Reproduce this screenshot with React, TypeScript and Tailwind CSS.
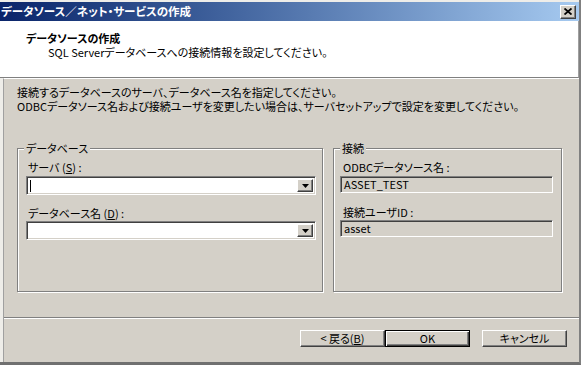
import React from "react";

const font = "[font-family:'MS_UI_Gothic','Noto_Sans_CJK_JP',sans-serif] [font-feature-settings:'palt']";

function DropArrow() {
  return (
    <div className="absolute right-[2px] top-[2px] bottom-[2px] w-[16px] bg-[#d4d0c8] border border-t-white border-l-white border-r-[#404040] border-b-[#404040] shadow-[inset_-1px_-1px_0_#808080] flex items-center justify-center">
      <svg width="7" height="4" viewBox="0 0 7 4">
        <path d="M0 0H7L3.5 4Z" fill="#000" />
      </svg>
    </div>
  );
}

function Combo({ cursor }: { cursor?: boolean }) {
  return (
    <div className="relative h-[19px] bg-white border border-t-[#808080] border-l-[#808080] border-r-white border-b-white shadow-[inset_1px_1px_0_#404040,inset_-1px_-1px_0_#d4d0c8]">
      {cursor && <div className="absolute left-[3px] top-[3px] w-px h-[12px] bg-black" />}
      <DropArrow />
    </div>
  );
}

function Field({ value }: { value: string }) {
  return (
    <div className="h-[17px] bg-[#d4d0c8] border border-t-[#808080] border-l-[#808080] border-r-white border-b-white shadow-[inset_1px_1px_0_#404040,inset_-1px_-1px_0_#d4d0c8] pl-[3px] text-[11px] leading-[15px] text-black">
      {value}
    </div>
  );
}

function Group({ title, className, children }: { title: string; className: string; children: React.ReactNode }) {
  return (
    <div className={`relative border border-[#808080] shadow-[inset_1px_1px_0_#fff,1px_1px_0_#fff] ${className}`}>
      <div className="absolute left-[6px] top-[-7px] bg-[#d4d0c8] px-[2px] text-[11px] leading-[12px]">{title}</div>
      {children}
    </div>
  );
}

function Button({ children, isDefault }: { children: React.ReactNode; isDefault?: boolean }) {
  return (
    <div
      className={`w-[85px] h-[17px] flex items-center justify-center bg-[#d4d0c8] text-[11px] leading-none ${
        isDefault
          ? "border border-black shadow-[inset_1px_1px_0_#fff,inset_-1px_-1px_0_#404040,inset_-2px_-2px_0_#808080]"
          : "border border-t-white border-l-white border-r-[#404040] border-b-[#404040] shadow-[inset_-1px_-1px_0_#808080]"
      }`}
    >
      {children}
    </div>
  );
}

export default function App() {
  return (
    <div className={`w-[585px] h-[367px] bg-white overflow-hidden text-black ${font}`}>
      <div className="w-[581px] h-[365px] flex flex-col bg-[#eeede9] pt-[2px] pl-[3px] border-r-2 border-r-[#808080] border-b-[3px] border-b-[#707070]">
        {/* title bar */}
        <div className="h-[19px] shrink-0 flex items-center justify-between bg-gradient-to-r from-[#0a246a] to-[#a6caf0] pl-[1px] pr-[3px] -ml-[3px]">
          <span className="text-white font-bold text-[11.5px] leading-none">データソース／ネット・サービスの作成</span>
          <div className="w-[16px] h-[14px] bg-[#d4d0c8] border border-t-white border-l-white border-r-[#404040] border-b-[#404040] shadow-[inset_-1px_-1px_0_#808080] flex items-center justify-center">
            <svg width="8" height="7" viewBox="0 0 8 7">
              <path d="M0.5 0.5L7.5 6.5M7.5 0.5L0.5 6.5" stroke="#000" strokeWidth="1.8" />
            </svg>
          </div>
        </div>
        {/* header */}
        <div className="h-[57px] shrink-0 bg-white -ml-[3px] pl-[26px] pt-[11px] border-b border-b-[#808080] border-r border-r-[#a0a0a0]">
          <div className="font-bold text-[11px] leading-[12px]">データソースの作成</div>
          <div className="ml-[22px] mt-[2px] text-[11px] leading-[12px]">SQL Serverデータベースへの接続情報を設定してください。</div>
        </div>
        {/* body */}
        <div className="flex-1 flex flex-col bg-[#d4d0c8] border-t border-t-white border-l border-l-[#a0a0a0]">
          <div className="pl-[13px] pt-[6px] text-[11px] leading-[14px]">
            <div>接続するデータベースのサーバ、データベース名を指定してください。</div>
            <div>ODBCデータソース名および接続ユーザを変更したい場合は、サーバセットアップで設定を変更してください。</div>
          </div>
          <div className="flex gap-[10px] pl-[13px] mt-[35px]">
            <Group title="データベース" className="w-[306px] h-[144px] pl-[8px] pr-[6px]">
              <div className="mt-[12px] text-[11px] leading-[12px] pl-[2px]">サーバ (<span className="underline">S</span>) :</div>
              <div className="mt-[3px]"><Combo cursor /></div>
              <div className="mt-[12px] text-[11px] leading-[12px] pl-[2px]">データベース名 (<span className="underline">D</span>) :</div>
              <div className="mt-[2px]"><Combo /></div>
            </Group>
            <Group title="接続" className="w-[229px] h-[144px] pl-[6px] pr-[8px]">
              <div className="mt-[12px] text-[11px] leading-[12px] pl-[3px]">ODBCデータソース名 :</div>
              <div className="mt-[3px]"><Field value="ASSET_TEST" /></div>
              <div className="mt-[13px] text-[11px] leading-[12px] pl-[3px]">接続ユーザID :</div>
              <div className="mt-[2px]"><Field value="asset" /></div>
            </Group>
          </div>
          <div className="mt-[25px] h-[2px] border-t border-t-[#808080] border-b border-b-white" />
          <div className="flex justify-end pr-[12px] mt-[11px] gap-0">
            <Button>&lt;&nbsp;戻る(<span className="underline">B</span>)</Button>
            <Button isDefault>OK</Button>
            <div className="w-[12px]" />
            <Button>キャンセル</Button>
          </div>
        </div>
      </div>
    </div>
  );
}
